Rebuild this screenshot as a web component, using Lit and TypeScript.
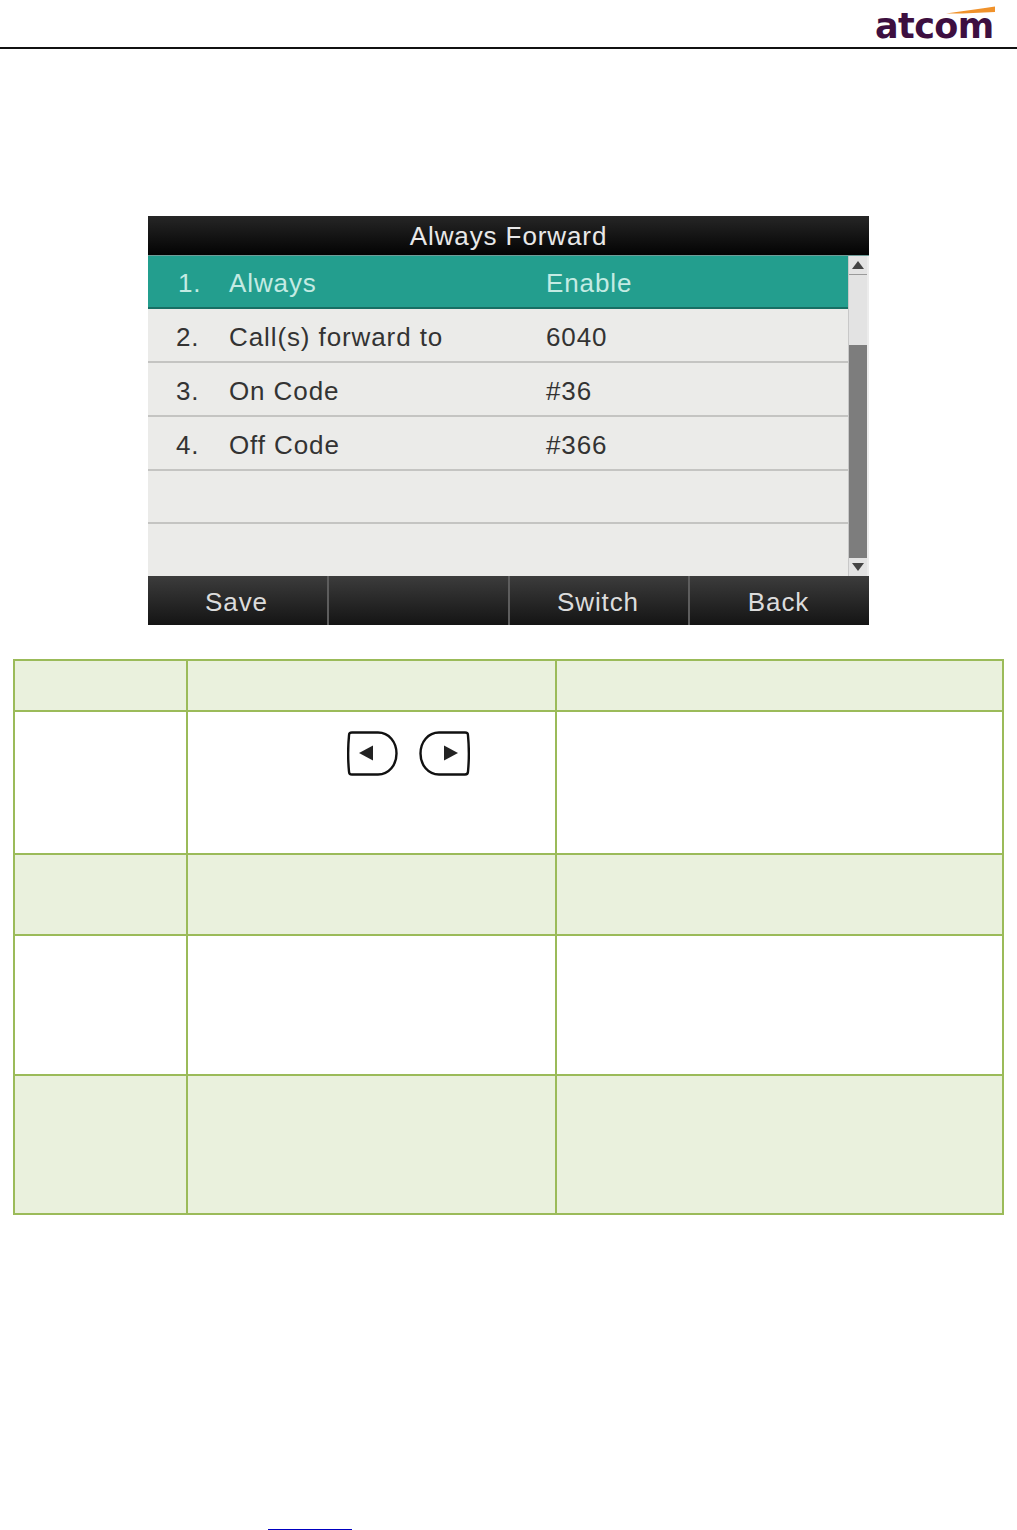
import { LitElement, html, css } from 'lit';
import { customElement } from 'lit/decorators.js';

const rows = [
  { num: '1.', label: 'Always', value: 'Enable' },
  { num: '2.', label: 'Call(s) forward to', value: '6040' },
  { num: '3.', label: 'On Code', value: '#36' },
  { num: '4.', label: 'Off Code', value: '#366' },
  { num: '', label: '', value: '' },
  { num: '', label: '', value: '' },
];

const softkeys = ['Save', '', 'Switch', 'Back'];

@customElement('app-root')
export class AppRoot extends LitElement {
  static styles = css`
    :host {
      display: block;
      width: 1017px;
      height: 1530px;
      overflow: hidden;
      background: #fff;
      font-family: 'Liberation Sans', Arial, sans-serif;
    }

    /* Page header */
    .header {
      height: 47px;
      border-bottom: 2px solid #111;
      display: flex;
      justify-content: flex-end;
      padding-right: 24px;
    }
    .logo {
      position: relative;
      width: 118px;
      height: 47px;
    }
    .logo svg {
      position: absolute;
      left: 71px;
      top: 6px;
    }
    .logo span {
      position: absolute;
      left: 0;
      top: 7px;
      font-family: 'DejaVu Sans', sans-serif;
      font-weight: 700;
      font-size: 35px;
      line-height: 38px;
      letter-spacing: -0.6px;
      color: #3d0f40;
    }

    /* Phone screen */
    .phone {
      width: 721px;
      margin: 167px 0 0 148px;
      background: #ebebe9;
      letter-spacing: 0.9px;
    }
    .title {
      height: 39px;
      line-height: 41px;
      text-align: center;
      color: #e8e8e8;
      font-size: 26px;
      background: linear-gradient(#262626, #030303);
      border-bottom: 1px solid #6f9c98;
    }
    .body {
      display: flex;
      height: 320px;
    }
    .list {
      flex: 1;
    }
    .row {
      display: flex;
      align-items: center;
      box-sizing: border-box;
      height: 54px;
      padding-top: 4px;
      font-size: 26px;
      color: #333;
      border-bottom: 2px solid #c4c4c2;
    }
    .row:last-child {
      height: 53px;
      border-bottom: none;
    }
    .row:nth-child(5) {
      height: 53px;
    }
    .row.active {
      height: 53px;
      color: #c4ebe3;
      background: #239e8e;
      border-bottom: 2px solid #176f64;
    }
    .row.active .num {
      padding-left: 30px;
    }
    .num {
      width: 81px;
      padding-left: 28px;
      box-sizing: border-box;
    }
    .label {
      width: 317px;
    }
    .scrollbar {
      width: 21px;
      box-sizing: border-box;
      display: flex;
      flex-direction: column;
      background: #e3e3e3;
      border-left: 1px solid #c8c8c8;
      border-right: 2px solid #ececec;
    }
    .arrow {
      height: 19px;
      box-sizing: border-box;
      display: flex;
      align-items: center;
      justify-content: center;
      border-bottom: 1px solid #9a9a9a;
    }
    .arrow.down {
      height: 18px;
      border-bottom: none;
    }
    .space {
      height: 70px;
    }
    .thumb {
      flex: 1;
      background: #7d7d7d;
    }
    .softkeys {
      display: grid;
      grid-template-columns: 181px 181px 180px 179px;
      grid-auto-rows: 49px;
      background: linear-gradient(#3c3c3c, #141414);
    }
    .softkey {
      text-align: center;
      line-height: 52px;
      padding-right: 2px;
      color: #dcdcdc;
      font-size: 26px;
      border-right: 2px solid #5d5d5d;
      box-sizing: border-box;
    }
    .softkey:last-child {
      border-right: none;
    }

    /* Table under the screen */
    .table {
      display: grid;
      grid-template-columns: 171px 367px 445px;
      grid-template-rows: 49px 141px 79px 138px 137px;
      gap: 2px;
      width: 987px;
      margin: 34px 0 0 13px;
      box-sizing: content-box;
      border: 2px solid #9bbb59;
      background: #9bbb59;
    }
    .cell {
      background: #fff;
    }
    .cell.tint {
      background: #eaf1dd;
    }
    .keys {
      display: flex;
      gap: 21px;
      padding: 19px 0 0 159px;
    }

    .rule {
      width: 84px;
      height: 1px;
      margin: 314px 0 0 268px;
      background: #0000c0;
    }
  `;

  render() {
    return html`
      <div class="header">
        <div class="logo">
          <svg width="50" height="10" viewBox="0 0 50 10">
            <path d="M0 7.5 C16 5 34 3 49 0.5 L49 6 C32 6.8 16 7.8 0 7.5 Z" fill="#f0922b" />
          </svg>
          <span>atcom</span>
        </div>
      </div>

      <div class="phone">
        <div class="title">Always Forward</div>
        <div class="body">
          <div class="list">
            ${rows.map(
              (r, i) => html`
                <div class="row ${i === 0 ? 'active' : ''}">
                  <span class="num">${r.num}</span>
                  <span class="label">${r.label}</span>
                  <span>${r.value}</span>
                </div>
              `
            )}
          </div>
          <div class="scrollbar">
            <div class="arrow">
              <svg width="12" height="8" viewBox="0 0 12 8"><path d="M6 0 L12 8 L0 8 Z" fill="#444" /></svg>
            </div>
            <div class="space"></div>
            <div class="thumb"></div>
            <div class="arrow down">
              <svg width="12" height="8" viewBox="0 0 12 8"><path d="M0 0 L12 0 L6 8 Z" fill="#444" /></svg>
            </div>
          </div>
        </div>
        <div class="softkeys">
          ${softkeys.map((k) => html`<div class="softkey">${k}</div>`)}
        </div>
      </div>

      <div class="table">
        ${[0, 1, 2].map(() => html`<div class="cell tint"></div>`)}
        <div class="cell"></div>
        <div class="cell keys">
          <svg width="51" height="45" viewBox="0 0 51 45">
            <path d="M5 1.5 H31 C42 1.5 49.5 11 49.5 22.5 C49.5 34 42 43.5 31 43.5 H5 C3 43.5 2 42.5 2 40.5 C1 30 1 15 2 4.5 C2 2.5 3 1.5 5 1.5 Z" fill="none" stroke="#111" stroke-width="2.4" />
            <path d="M12 22 L26 14.5 V29.5 Z" fill="#222" />
          </svg>
          <svg width="51" height="45" viewBox="0 0 51 45">
            <path d="M46 1.5 H20 C9 1.5 1.5 11 1.5 22.5 C1.5 34 9 43.5 20 43.5 H46 C48 43.5 49 42.5 49 40.5 C50 30 50 15 49 4.5 C49 2.5 48 1.5 46 1.5 Z" fill="none" stroke="#111" stroke-width="2.4" />
            <path d="M39 22 L25 14.5 V29.5 Z" fill="#222" />
          </svg>
        </div>
        <div class="cell"></div>
        ${[0, 1, 2].map(() => html`<div class="cell tint"></div>`)}
        ${[0, 1, 2].map(() => html`<div class="cell"></div>`)}
        ${[0, 1, 2].map(() => html`<div class="cell tint"></div>`)}
      </div>

      <div class="rule"></div>
    `;
  }
}

declare global {
  interface HTMLElementTagNameMap {
    'app-root': AppRoot;
  }
}
